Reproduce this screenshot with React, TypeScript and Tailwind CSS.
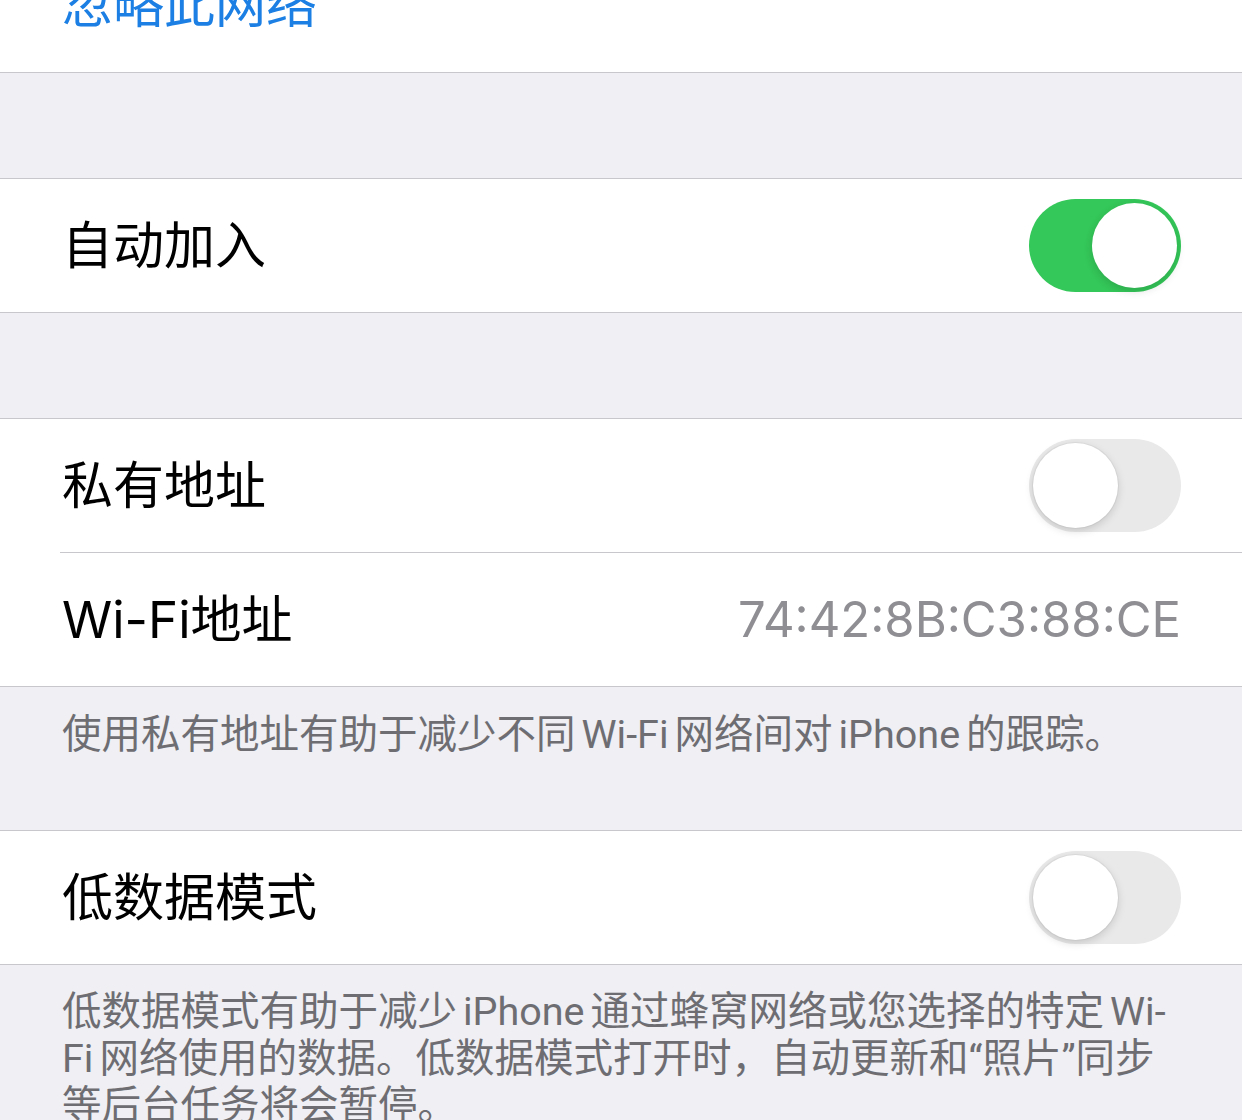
import React from 'react';

const font = { fontFamily: 'Roboto, "Noto Sans CJK SC", sans-serif' };
const rowFont = { fontFamily: 'Inter, "Noto Sans CJK SC", sans-serif' };

function Toggle({ on }: { on: boolean }) {
  if (on) {
    return (
      <div className="relative h-[93px] w-[152px] rounded-full bg-[#34c759]">
        <div className="absolute right-[4px] top-[4px] h-[85px] w-[85px] rounded-full bg-white shadow-[0_3px_8px_rgba(0,0,0,0.15)]" />
      </div>
    );
  }
  return (
    <div className="relative h-[93px] w-[152px] rounded-full bg-[#e9e9ea]">
      <div className="absolute left-[4px] top-[4px] h-[85px] w-[85px] rounded-full bg-white shadow-[0_3px_8px_rgba(0,0,0,0.15),0_0_0_1px_rgba(0,0,0,0.04)]" />
    </div>
  );
}

function Row({ label, right }: { label: React.ReactNode; right?: React.ReactNode }) {
  return (
    <div className="flex h-[133px] items-center justify-between pl-[62px] pr-[61px]" style={rowFont}>
      <span className="text-[51px] leading-none text-black">{label}</span>
      {right}
    </div>
  );
}

// latin word inside chinese footnote, with the small gap iOS puts around it
function L({ children }: { children: React.ReactNode }) {
  return <span className="mx-[6px]">{children}</span>;
}

export default function App() {
  return (
    <div className="h-[1120px] w-[1242px] overflow-hidden bg-[#efeff4]" style={font}>
      {/* ignore network */}
      <div className="mt-[-61px] border-b border-[#c8c7cc] bg-white">
        <div className="flex h-[133px] items-center pl-[62px]">
          <span className="text-[51px] leading-none text-[#1b7fe3]">忽略此网络</span>
        </div>
      </div>

      <div className="h-[105px]" />

      <div className="border-y border-[#c8c7cc] bg-white">
        <Row label="自动加入" right={<Toggle on />} />
      </div>

      <div className="h-[105px]" />

      <div className="border-y border-[#c8c7cc] bg-white">
        <Row label="私有地址" right={<Toggle on={false} />} />
        <div className="ml-[60px] h-px bg-[#c8c7cc]" />
        <Row
          label="Wi-Fi地址"
          right={<span className="text-[49px] leading-none text-[#8e8e93]">74:42:8B:C3:88:CE</span>}
        />
      </div>

      <div className="h-[143px] whitespace-nowrap px-[62px] pt-[24px] text-[39.5px] leading-[47px] text-[#6d6d72]">
        使用私有地址有助于减少不同<L>Wi-Fi</L>网络间对<L>iPhone</L>的跟踪。
      </div>

      <div className="border-y border-[#c8c7cc] bg-white">
        <Row label="低数据模式" right={<Toggle on={false} />} />
      </div>

      <div className="whitespace-nowrap px-[62px] pt-[23px] text-[39.5px] leading-[47px] text-[#6d6d72]">
        <div>
          低数据模式有助于减少<L>iPhone</L>通过蜂窝网络或您选择的特定<span className="ml-[6px]">Wi-</span>
        </div>
        <div>
          <span className="mr-[6px]">Fi</span>网络使用的数据。低数据模式打开时，自动更新和“照片”同步
        </div>
        <div>等后台任务将会暂停。</div>
      </div>
    </div>
  );
}
